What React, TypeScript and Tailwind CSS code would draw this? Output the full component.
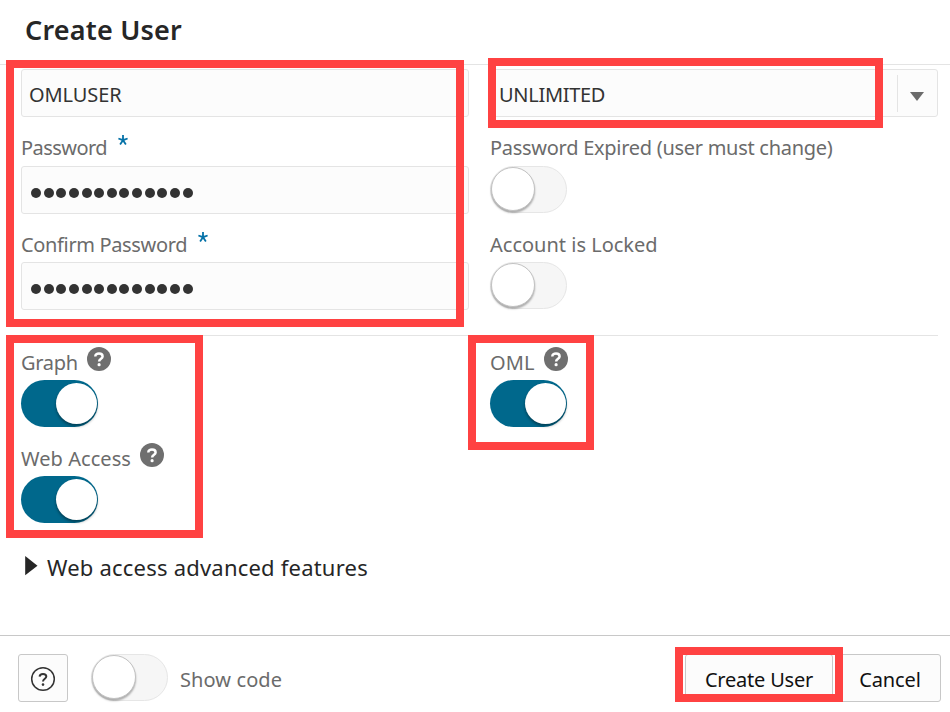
import React from "react";

type TextProps = { children: React.ReactNode; className?: string };

function Label({ children, className = "" }: TextProps) {
  return (
    <span className={`whitespace-nowrap text-[20px] leading-[28px] text-[#6b6b6b] ${className}`}>
      {children}
    </span>
  );
}

function Toggle({ on = false }: { on?: boolean }) {
  return on ? (
    <div className="flex h-[47px] w-[77px] shrink-0 items-center justify-end rounded-full bg-[#00688c] pr-px">
      <div className="size-[41px] rounded-full bg-white shadow-[0_2px_3px_rgba(0,0,0,0.4)]" />
    </div>
  ) : (
    <div className="flex h-[47px] w-[77px] shrink-0 items-start rounded-full border border-[#e6e6e6] bg-[#f6f6f6]">
      <div className="size-[44px] rounded-full border border-[#c2c2c2] bg-white shadow-[0_2px_2px_rgba(0,0,0,0.3)]" />
    </div>
  );
}

function HelpBadge() {
  return (
    <svg width="24" height="24" viewBox="0 0 24 24" className="mt-[11px] shrink-0">
      <circle cx="12" cy="12" r="12" fill="#6f6f6f" />
      <path
        d="M8.3 9.4C8.3 7.4 9.8 6.5 12 6.5S15.6 7.5 15.6 9.4C15.6 11.8 12.1 11.6 12.1 14.6"
        fill="none"
        stroke="#fff"
        strokeWidth="2.5"
      />
      <circle cx="12.1" cy="17.7" r="1.6" fill="#fff" />
    </svg>
  );
}

function PasswordField() {
  return (
    <div className="flex h-12 w-[448px] items-center gap-[2.65px] rounded-[3px] border border-[#e4e4e4] bg-[#fcfcfc] pt-[6px] pl-[9px]">
      {Array.from({ length: 13 }, (_, i) => (
        <span key={i} className="size-[10px] shrink-0 rounded-full bg-[#333]" />
      ))}
    </div>
  );
}

function Asterisk() {
  return (
    <svg width="10" height="11" viewBox="0 0 10 11" className="mt-px ml-[11px]">
      <path d="M5 0V5.2M.4 3.5 5 5.2 9.6 3.5M2.1 9.4 5 5.2 7.9 9.4" fill="none" stroke="#0572a8" strokeWidth="1.8" />
    </svg>
  );
}

export default function App() {
  return (
    <div className="relative flex h-[712px] w-[950px] flex-col overflow-hidden bg-white font-['Noto_Sans','Open_Sans',sans-serif]">
      <header className="h-[65px] shrink-0 border-b border-[#e4e4e4] pl-[25px]">
        <h1 className="pt-[12px] text-[27px] leading-[36px] font-semibold tracking-[0.2px] whitespace-nowrap text-[#262626]">
          Create User
        </h1>
      </header>

      <main className="flex h-[570px] shrink-0 flex-col pt-1 pr-3 pl-[21px]">
        <section className="flex h-[267px] gap-[21px] border-b border-[#e4e4e4]">
          <div className="flex w-[448px] flex-col">
            <div className="flex h-12 items-center rounded-[3px] border border-[#e4e4e4] bg-[#fcfcfc] pt-[3px] pl-[7px]">
              <span className="text-[20px] leading-[28px] tracking-[-0.1px] text-[#333]">OMLUSER</span>
            </div>
            <div className="flex h-[49px] pt-[17px]">
              <Label className="tracking-[-0.55px]">Password</Label>
              <Asterisk />
            </div>
            <PasswordField />
            <div className="flex h-12 pt-[17px]">
              <Label className="tracking-[-0.35px]">Confirm Password</Label>
              <Asterisk />
            </div>
            <PasswordField />
          </div>
          <div className="flex w-[448px] flex-col">
            <div className="flex h-12 items-center justify-between rounded-[3px] border border-[#e4e4e4] bg-[#fcfcfc] pl-2">
              <span className="pt-[3px] text-[20px] leading-[28px] tracking-[-0.3px] text-[#333]">UNLIMITED</span>
              <div className="flex h-[37px] w-10 items-center border-l border-[#e4e4e4] pt-[6px] pl-3">
                <svg width="14" height="9" viewBox="0 0 14 9">
                  <path d="M0 0H14L7 9Z" fill="#6b6b6b" />
                </svg>
              </div>
            </div>
            <div className="h-[49px] pt-[17px]">
              <Label className="tracking-[-0.28px]">Password Expired (user must change)</Label>
            </div>
            <Toggle />
            <div className="h-[49px] pt-[18px]">
              <Label>Account is Locked</Label>
            </div>
            <Toggle />
          </div>
        </section>

        <section className="flex h-[187px]">
          <div className="w-[469px]">
            <div className="flex h-11 gap-[9px]">
              <Label className="pt-[13px] tracking-[-0.3px]">Graph</Label>
              <HelpBadge />
            </div>
            <Toggle on />
            <div className="flex h-[49px] gap-[9px] pt-[5px]">
              <Label className="pt-[13px] tracking-[0.05px]">Web Access</Label>
              <HelpBadge />
            </div>
            <Toggle on />
          </div>
          <div>
            <div className="flex h-11 gap-[9px]">
              <Label className="pt-[13px] tracking-[0.1px]">OML</Label>
              <HelpBadge />
            </div>
            <Toggle on />
          </div>
        </section>

        <div className="flex pt-[29px] pl-1">
          <svg width="13" height="20" viewBox="0 0 13 20" className="mt-1">
            <path d="M.2 0 12.5 9.7 .2 19.3Z" fill="#262626" />
          </svg>
          <span className="ml-[9px] text-[22px] leading-[30px] tracking-[0.21px] whitespace-nowrap text-[#262626]">
            Web access advanced features
          </span>
        </div>
      </main>

      <footer className="flex h-[77px] shrink-0 items-start border-t border-[#c8c8c8] pt-[18px] pr-[9px] pl-[18px]">
        <button className="flex h-12 w-[50px] items-center justify-center rounded-[3px] border border-[#c8c8c8] bg-[#fcfcfc] pt-px">
          <svg width="26" height="26" viewBox="0 0 26 26" fill="none" stroke="#333" strokeWidth="1.5">
            <circle cx="13" cy="13" r="11.3" />
            <path d="M9.6 10.6C9.7 8.9 11 8 13 8S16.3 9.1 16.3 10.5C16.3 12.8 13 12.8 13 15.6" strokeWidth="2" />
            <circle cx="13" cy="18.6" r="1.3" fill="#333" stroke="none" />
          </svg>
        </button>
        <div className="ml-[23px]">
          <Toggle />
        </div>
        <Label className="mt-[12px] ml-[12px] tracking-[0.1px]">Show code</Label>
        <div className="ml-auto flex gap-[6px]">
          <button className="h-12 w-[148px] rounded-[3px] border border-[#c8c8c8] bg-[#fcfcfc] pt-[3px] text-[20px] tracking-[-0.2px] whitespace-nowrap text-[#111]">
            Create User
          </button>
          <button className="h-12 w-[102px] rounded-[3px] border border-[#c8c8c8] bg-[#fcfcfc] pt-[3px] text-[20px] tracking-[-0.15px] whitespace-nowrap text-[#111]">
            Cancel
          </button>
        </div>
      </footer>

      <div className="absolute top-[60px] left-[6px] h-[267px] w-[458px] border-8 border-[#ff4242]" />
      <div className="absolute top-[58px] left-[488px] h-[70px] w-[395px] border-8 border-[#ff4242]" />
      <div className="absolute top-[335px] left-[6px] h-[203px] w-[197px] border-8 border-[#ff4242]" />
      <div className="absolute top-[335px] left-[468px] h-[115px] w-[126px] border-8 border-[#ff4242]" />
      <div className="absolute top-[647px] left-[675px] h-[55px] w-[168px] border-8 border-[#ff4242]" />
    </div>
  );
}
